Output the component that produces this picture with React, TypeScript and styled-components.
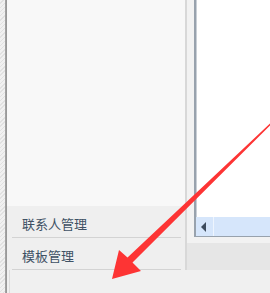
import React from "react";
import styled, { createGlobalStyle } from "styled-components";

const Global = createGlobalStyle`
  html, body { margin: 0; padding: 0; background: #f0f0f0; }
  body { width: 270px; height: 293px; overflow: hidden; }
`;

const Page = styled.div`
  position: relative;
  display: flex;
  width: 270px;
  height: 293px;
  overflow: hidden;
  font-family: "Noto Sans CJK SC", "Noto Sans", sans-serif;
`;

const Hatch = styled.div`
  width: 5px;
  flex: none;
  background: repeating-linear-gradient(
    135deg,
    #f1f1f1 0px,
    #f1f1f1 2px,
    #e1e1e1 2px,
    #e1e1e1 3px
  );
`;

const Rule = styled.div`
  width: 2px;
  flex: none;
  background: linear-gradient(to right, #a8a8a8, #949494);
`;

const Main = styled.div`
  flex: 1;
  display: flex;
  flex-direction: column;
`;

const Top = styled.div`
  height: 270px;
  display: flex;
`;

const LeftPanel = styled.div`
  width: 178px;
  display: flex;
  flex-direction: column;
  background: #efefef;
`;

const Blank = styled.div`
  flex: 1;
  background: #f8f8f8;
`;

const NavItem = styled.div`
  position: relative;
  height: 32px;
  box-sizing: border-box;
  padding: 3px 0 0 15px;
  display: flex;
  align-items: center;
  font-size: 13px;
  color: #3e5164;
  background: #efefef;
  &::after {
    content: "";
    position: absolute;
    left: 5px;
    right: 4px;
    bottom: 0;
    height: 1px;
    background: #d3d3d3;
  }
`;

const Splitter = styled.div`
  width: 2px;
  flex: none;
  background: #d8d8d8;
`;

const RightArea = styled.div`
  flex: 1;
  display: flex;
  flex-direction: column;
  background: #e6e6e6;
`;

const Frame = styled.div`
  height: 243px;
  box-sizing: border-box;
  padding: 0 0 6px 7px;
  background: #f2f2f2;
  display: flex;
`;

const Panel = styled.div`
  flex: 1;
  display: flex;
  flex-direction: column;
  background: #ffffff;
  border-left: 2px solid #98a2ad;
  border-bottom: 1px solid #98a2ad;
  box-shadow: inset 1px 0 0 #c9cfd6;
`;

const PanelBody = styled.div`
  flex: 1;
`;

const ScrollBar = styled.div`
  height: 19px;
  display: flex;
  background: #d6e6fb;
`;

const ArrowButton = styled.div`
  width: 18px;
  display: flex;
  align-items: center;
  justify-content: center;
  border-right: 1px solid #eef5fe;
  padding-right: 3px;
  box-sizing: border-box;
  &::before {
    content: "";
    width: 0;
    height: 0;
    border-top: 5px solid transparent;
    border-bottom: 5px solid transparent;
    border-right: 5px solid #3d4b5d;
  }
`;

const Footer = styled.div`
  flex: 1;
  background: #f0f0f0;
  padding-left: 2px;
  display: flex;
`;

const FooterEdge = styled.div`
  width: 1px;
  background: #dcdcdc;
`;

const Overlay = styled.svg`
  position: absolute;
  left: 0;
  top: 0;
  pointer-events: none;
`;

export default function App() {
  return (
    <>
      <Global />
      <Page>
        <Hatch />
        <Rule />
        <Main>
          <Top>
            <LeftPanel>
              <Blank />
              <NavItem>联系人管理</NavItem>
              <NavItem>模板管理</NavItem>
            </LeftPanel>
            <Splitter />
            <RightArea>
              <Frame>
                <Panel>
                  <PanelBody />
                  <ScrollBar>
                    <ArrowButton />
                  </ScrollBar>
                </Panel>
              </Frame>
            </RightArea>
          </Top>
          <Footer>
            <FooterEdge />
          </Footer>
        </Main>
        <Overlay width="270" height="293" viewBox="0 0 270 293">
          <polygon
            points="271,122.5 271.5,124 132.5,262.5 141,271 112,279 119,250 127.5,257.5"
            fill="#fd3434"
          />
        </Overlay>
      </Page>
    </>
  );
}
